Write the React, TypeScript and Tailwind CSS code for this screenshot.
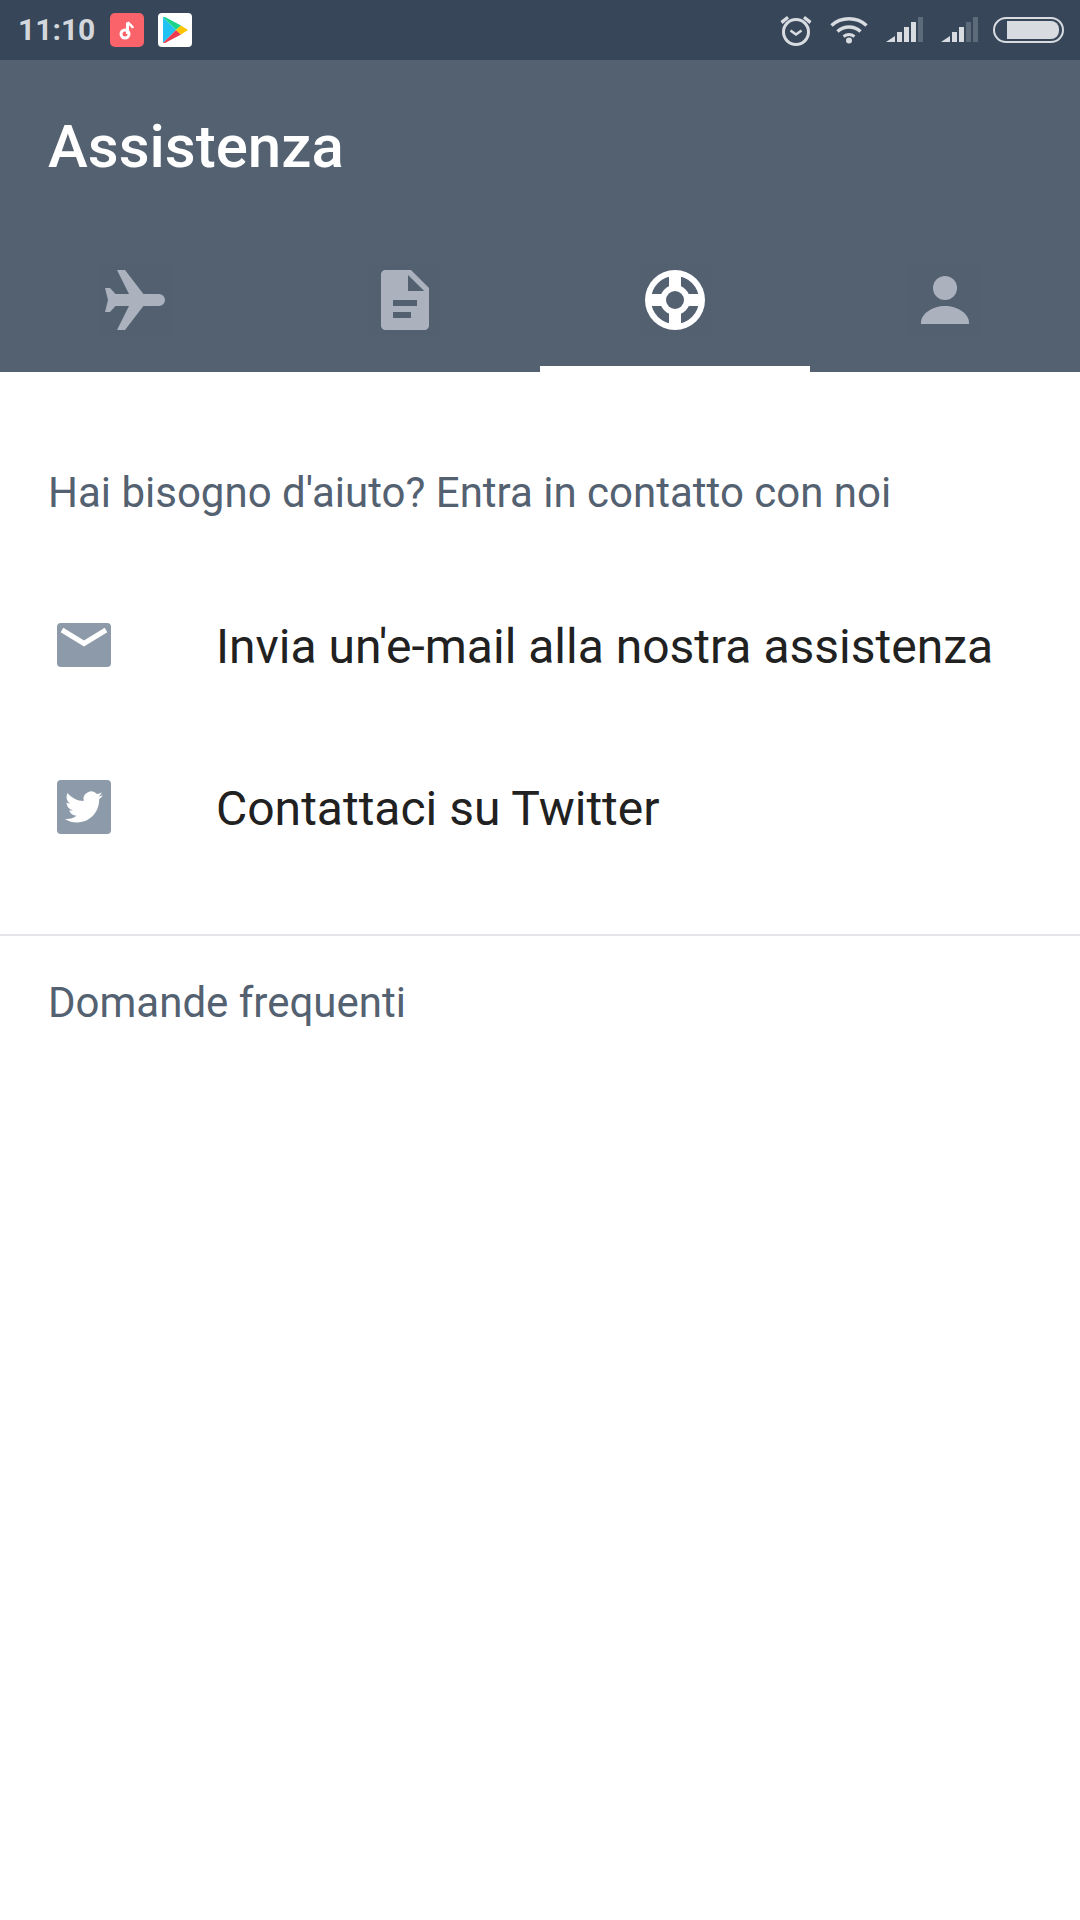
import React from "react";

const Tab = ({ active, children }: { active?: boolean; children: React.ReactNode }) => (
  <div className="flex flex-col items-center">
    <div className="w-[72px] h-[72px] bg-[#526070]">
      <svg viewBox="0 0 24 24" width="72" height="72" className="block">{children}</svg>
    </div>
    <div className={active ? "mt-[30px] h-[6px] w-full bg-white" : "mt-[30px] h-[6px] w-full"} />
  </div>
);

const Signal = ({ dim }: { dim: number }) => (
  <svg width="37" height="26" viewBox="0 0 37 26" className="block">
    <polygon points="0,25 9,19 9,25" fill="#d8dbe0" />
    <rect x="11" y="15" width="5" height="10" fill={dim >= 4 ? "#5c6a7a" : "#d8dbe0"} />
    <rect x="18" y="10" width="5" height="15" fill={dim >= 3 ? "#5c6a7a" : "#d8dbe0"} />
    <rect x="25" y="5" width="5" height="20" fill={dim >= 2 ? "#5c6a7a" : "#d8dbe0"} />
    <rect x="32" y="0" width="5" height="25" fill={dim >= 1 ? "#5c6a7a" : "#d8dbe0"} />
  </svg>
);

export default function App() {
  return (
    <div className="w-[1080px] h-[1920px] bg-white font-['Roboto',sans-serif] overflow-hidden">
      <div className="h-[60px] bg-[#374759] flex items-center pl-[18px] pr-[16px]">
        <span className="text-[30px] leading-[60px] font-bold text-[#d3d7dc] w-[92px]">11:10</span>
        <div className="w-[34px] h-[34px] rounded-[5px] bg-[#fb636b]">
          <svg viewBox="0 0 34 34" width="34" height="34" className="block">
            <circle cx="15" cy="21" r="4" fill="none" stroke="#fff" strokeWidth="3" />
            <path d="M17.5 21V9.5" stroke="#fff" strokeWidth="3" fill="none" />
            <path d="M18 9c1 3 4 3 5 6" stroke="#fff" strokeWidth="2.4" fill="none" />
          </svg>
        </div>
        <div className="w-[34px] h-[34px] rounded-[4px] bg-white ml-[14px]">
          <svg viewBox="0 0 34 34" width="34" height="34" className="block">
            <polygon points="5,4 18,17 5,30" fill="#1fc2f3" />
            <polygon points="5,4 7,4 23,12.5 18,17" fill="#19d48b" />
            <polygon points="5,30 18,17 23,21.5 7,30" fill="#ee3b50" />
            <polygon points="23,12.5 30,17 23,21.5 18,17" fill="#fec400" />
          </svg>
        </div>
        <div className="flex-1" />
        <svg width="34" height="32" viewBox="0 0 34 32" className="block mr-[17px]">
          <circle cx="17" cy="18" r="12.5" fill="none" stroke="#d8dbe0" strokeWidth="3" />
          <path d="M11.5 16.5 17 20.5 22.5 16.5" fill="none" stroke="#d8dbe0" strokeWidth="2.6" />
          <path d="M1.5 7 8 2 10 4.5 3.5 10z M32.5 7 26 2 24 4.5 30.5 10z" fill="#d8dbe0" />
        </svg>
        <svg width="38" height="28" viewBox="0 0 38 28" className="block mr-[18px]">
          <path d="M1.5 9.5C11 0.5 27 0.5 36.5 9.5" fill="none" stroke="#d8dbe0" strokeWidth="3.4" />
          <path d="M7.5 15.5C14 9.5 24 9.5 30.5 15.5" fill="none" stroke="#d8dbe0" strokeWidth="3.4" />
          <path d="M13.5 20.5C17 18 21 18 24.5 20.5" fill="none" stroke="#d8dbe0" strokeWidth="3" />
          <circle cx="19" cy="24.5" r="3" fill="#d8dbe0" />
        </svg>
        <Signal dim={1} />
        <div className="w-[18px]" />
        <Signal dim={2} />
        <div className="w-[15px]" />
        <div className="w-[71px] h-[26px] rounded-[13px] border-[2px] border-[#d8dbe0] flex items-center pl-[12px] pr-[3px]">
          <div className="flex-1 h-[18px] bg-[#d8dbe0] rounded-r-[8px]" />
        </div>
      </div>

      <div className="h-[312px] bg-[#536171]">
        <div className="pl-[48px] pt-[51px] h-[204px]">
          <h1 className="text-[60px] leading-[72px] font-medium text-white">Assistenza</h1>
        </div>
        <div className="grid grid-cols-4">
          <Tab>
            <path
              d="M20 10a2 2 0 0 1 0 4H14.8L8.67 22H6l4-8H5.5l-1.83 2H2l1-4-1-4h1.67L5.5 10H10L6 2h2.67L14.8 10z"
              fill="#abb2bd"
            />
          </Tab>
          <Tab>
            <path
              fillRule="evenodd"
              d="M14 2H5.5C4.7 2 4 2.7 4 3.5v17c0 .8.7 1.500 1.500 1.500h13c.8 0 1.500-.7 1.500-1.500V8zM13 3.700V9h5.400zM8 12v2h8v-2zM8 16v2h6v-2z"
              fill="#abb2bd"
            />
          </Tab>
          <Tab active>
            <circle cx="12" cy="12" r="10" fill="#fff" />
            <circle cx="12" cy="12" r="8" fill="#536171" />
            <rect x="10" y="3" width="4" height="18" fill="#fff" />
            <rect x="3" y="10" width="18" height="4" fill="#fff" />
            <circle cx="12" cy="12" r="5" fill="#fff" />
            <circle cx="12" cy="12" r="3" fill="#536171" />
          </Tab>
          <Tab>
            <circle cx="12" cy="8" r="4" fill="#abb2bd" />
            <path d="M4 20v-.5C4 16.500 8 14 12 14s8 2.500 8 5.500v.5z" fill="#abb2bd" />
          </Tab>
        </div>
      </div>

      <p className="pl-[48px] pt-[93px] text-[42px] leading-[56px] text-[#536171]">
        Hai bisogno d'aiuto? Entra in contatto con noi
      </p>

      <div className="mt-[43px]">
        <div className="h-[162px] flex items-center pl-[57px]">
          <div className="w-[54px] h-[44px] rounded-[4px] bg-[#8c9aaa]">
            <svg width="54" height="44" viewBox="0 0 54 44" className="block">
              <path d="M5 7 27 20.500 49 7" fill="none" stroke="#fff" strokeWidth="5" />
            </svg>
          </div>
          <span className="ml-[105px] pt-[4px] text-[48px] leading-[56px] text-[#212121]">
            Invia un'e-mail alla nostra assistenza
          </span>
        </div>
        <div className="h-[162px] flex items-center pl-[57px]">
          <div className="w-[54px] h-[54px] rounded-[4px] bg-[#8c9aaa] flex items-center justify-center">
            <svg width="38" height="38" viewBox="0 0 24 24" className="block">
              <path
                fill="#fff"
                d="M23.953 4.570a10 10 0 01-2.825.775 4.958 4.958 0 002.163-2.723c-.951.555-2.005.959-3.127 1.184a4.920 4.920 0 00-8.384 4.482C7.690 8.095 4.067 6.130 1.640 3.162a4.822 4.822 0 00-.666 2.475c0 1.710.870 3.213 2.188 4.096a4.904 4.904 0 01-2.228-.616v.060a4.923 4.923 0 003.946 4.827 4.996 4.996 0 01-2.212.085 4.936 4.936 0 004.604 3.417 9.867 9.867 0 01-6.102 2.105c-.390 0-.779-.023-1.170-.067a13.995 13.995 0 007.557 2.209c9.053 0 13.998-7.496 13.998-13.985 0-.210 0-.420-.015-.630A9.935 9.935 0 0024 4.590z"
              />
            </svg>
          </div>
          <span className="ml-[105px] pt-[4px] text-[48px] leading-[56px] text-[#212121]">Contattaci su Twitter</span>
        </div>
      </div>

      <div className="mt-[46px] h-[2px] bg-[#e3e5e8]" />

      <p className="pl-[48px] pt-[39px] text-[42px] leading-[56px] text-[#536171]">Domande frequenti</p>
    </div>
  );
}
